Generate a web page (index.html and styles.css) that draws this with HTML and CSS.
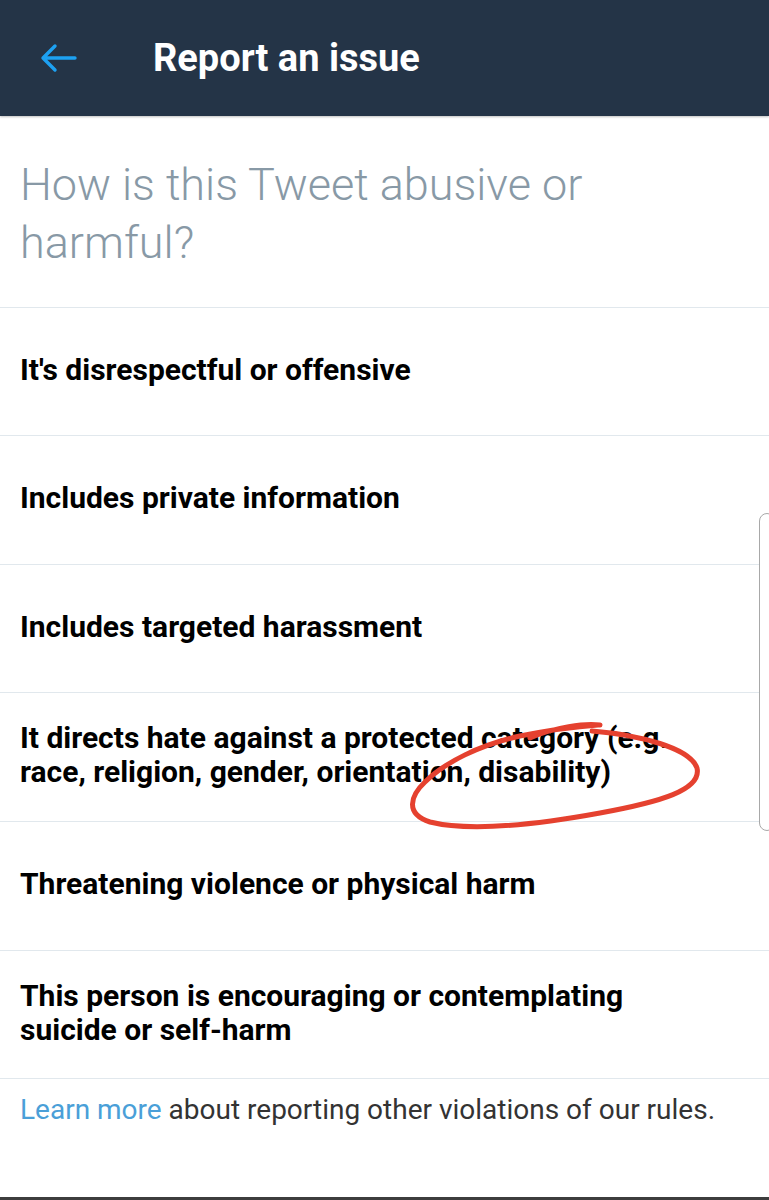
FILE: index.html
```html
<!DOCTYPE html>
<html lang="en">
<head>
    <meta charset="UTF-8">
    <meta name="viewport" content="width=device-width, initial-scale=1.0">
    <title>Report an issue</title>
    <link rel="stylesheet" href="styles.css">
</head>
<body>
    <header class="topbar">
        <svg class="back" viewBox="0 0 40 40" width="40" height="40">
            <path d="M37 20H5M17 8L5 20l12 12" fill="none" stroke="#1da1f2" stroke-width="3.4" stroke-linecap="round" stroke-linejoin="round"/>
        </svg>
        <h1 class="title">Report an issue</h1>
    </header>

    <main class="page">
        <h2 class="question">How is this Tweet abusive or harmful?</h2>

        <ul class="options">
            <li class="option">It's disrespectful or offensive</li>
            <li class="option">Includes private information</li>
            <li class="option">Includes targeted harassment</li>
            <li class="option">It directs hate against a protected category (e.g. race, religion, gender, orientation, disability)</li>
            <li class="option">Threatening violence or physical harm</li>
            <li class="option">This person is encouraging or contemplating suicide or self-harm</li>
        </ul>

        <p class="footer"><a href="#" class="link">Learn more</a> about reporting other violations of our rules.</p>
    </main>

    <!-- scroll handle on the right edge -->
    <div class="scroll-handle"></div>

    <!-- red pen mark drawn over the screenshot -->
    <svg class="scribble" viewBox="0 0 769 1200" width="769" height="1200">
        <path d="M530 738 C555 727 585 723 600 725
                 M592 731 C640 735 690 748 697 768
                 C702 790 660 802 600 813
                 C540 824 470 832 430 822
                 C405 814 410 796 425 782
                 C445 762 480 745 520 736
                 C545 731 570 727 598 725"
              fill="none" stroke="#e5412f" stroke-width="5" stroke-linecap="round" stroke-linejoin="round"/>
    </svg>
</body>
</html>
```

FILE: styles.css
```css
* {
    box-sizing: border-box;
}

body {
    margin: 0;
    background-color: #ffffff;
    font-family: Roboto, "Liberation Sans", sans-serif;
    color: #000000;
    height: 1200px;
    border-bottom: 3px solid #3d3d3d;
    overflow: hidden;
}

.topbar {
    height: 116px;
    background-color: #243447;
    display: flex;
    align-items: center;
    padding-left: 38px;
    box-shadow: 0 1px 2px rgba(0, 0, 0, 0.25);
}

.back {
    display: block;
}

.title {
    margin: 0 0 0 75px;
    color: #ffffff;
    font-size: 38px;
    font-weight: 700;
}

.question {
    margin: 0;
    padding: 40px 140px 0 20px;
    height: 192px;
    font-size: 45px;
    font-weight: 300;
    line-height: 58px;
    color: #8899a6;
    border-bottom: 1px solid #e1e8ed;
}

.options {
    list-style: none;
    margin: 0;
    padding: 0;
}

.option {
    height: 128px;
    display: flex;
    align-items: center;
    padding: 0 45px 4px 20px;
    font-size: 30px;
    font-weight: 700;
    line-height: 34px;
    border-bottom: 1.5px solid #e1e8ed;
}

.option:nth-child(2),
.option:nth-child(4),
.option:nth-child(5) {
    height: 129px;
}

.footer {
    margin: 0;
    padding: 14px 20px;
    font-size: 28px;
    color: #333333;
}

.link {
    color: #4a9fd8;
    text-decoration: none;
}

.scroll-handle {
    position: absolute;
    top: 513px;
    left: 759px;
    width: 16px;
    height: 318px;
    border: 1px solid #a8a8a8;
    border-radius: 8px;
    background-color: #ffffff;
}

.scribble {
    position: absolute;
    top: 0;
    left: 0;
    pointer-events: none;
}
```
